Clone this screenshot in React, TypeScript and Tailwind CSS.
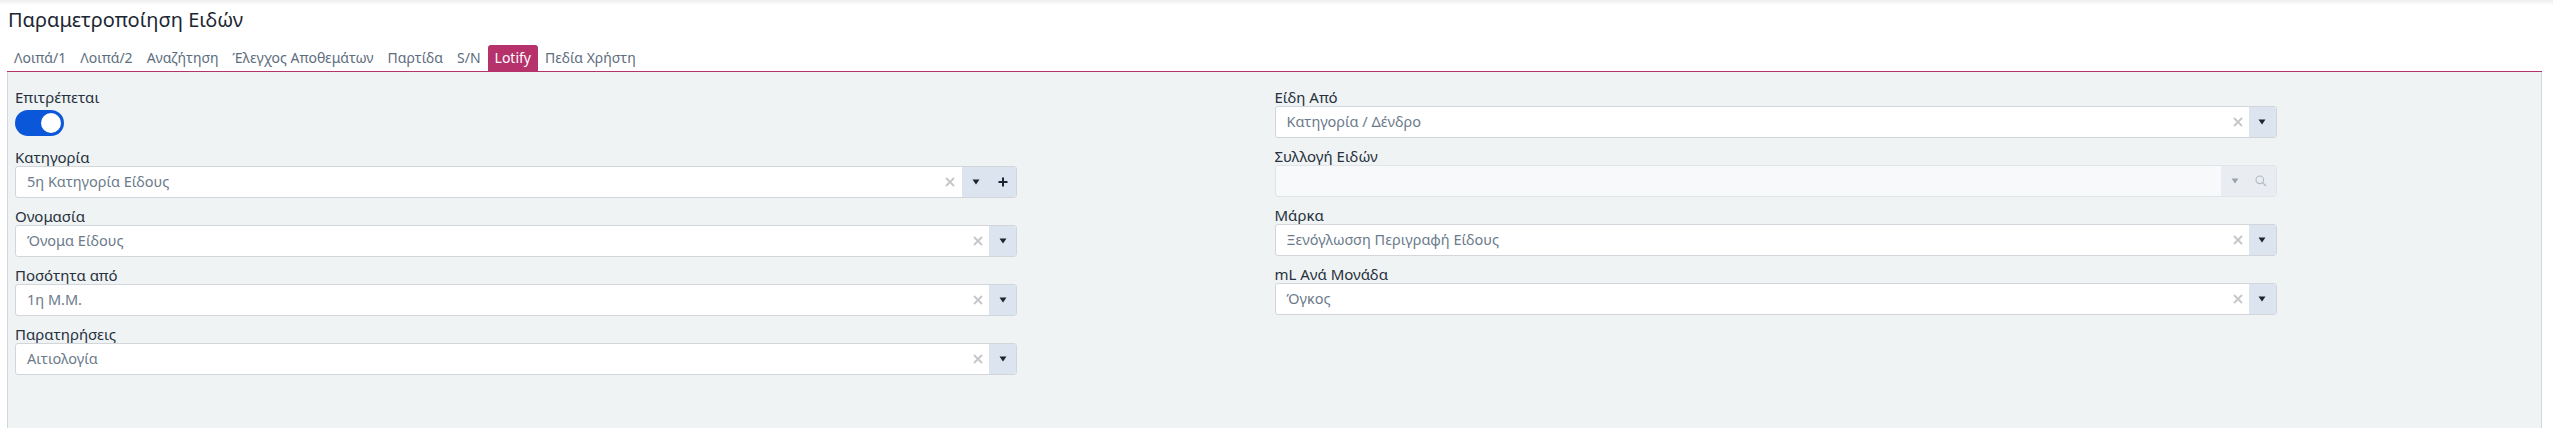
import React from "react";

const tabs = [
	"Λοιπά/1",
	"Λοιπά/2",
	"Αναζήτηση",
	"Έλεγχος Αποθεμάτων",
	"Παρτίδα",
	"S/N",
	"Lotify",
	"Πεδία Χρήστη",
];

const ClearIcon = () => (
	<svg width="10" height="10" viewBox="0 0 10 10" className="shrink-0">
		<path d="M1 1L9 9M9 1L1 9" stroke="#c4c6c8" strokeWidth="1.8" />
	</svg>
);

const Caret = ({ color = "#1b2533" }: { color?: string }) => (
	<svg width="8" height="6" viewBox="0 0 8 6">
		<path d="M0.5 0.5H7.5L4 5.5Z" fill={color} />
	</svg>
);

const Plus = () => (
	<svg width="10" height="10" viewBox="0 0 10 10">
		<path d="M5 0.5V9.5M0.5 5H9.5" stroke="#1b2533" strokeWidth="2" />
	</svg>
);

const Search = () => (
	<svg width="12" height="12" viewBox="0 0 12 12" fill="none">
		<circle cx="4.8" cy="4.8" r="3.8" stroke="#b3b9c0" strokeWidth="1.1" />
		<path d="M7.6 7.6L11 11" stroke="#b3b9c0" strokeWidth="1.3" />
	</svg>
);

type SelectProps = {
	label: string;
	value?: string;
	withAdd?: boolean;
	disabled?: boolean;
};

const SelectField: React.FC<SelectProps> = ({ label, value, withAdd, disabled }) => {
	return (
		<div className="flex flex-col">
			<label className="text-[15px] leading-[18px] text-[#26313d]">{label}</label>
			{disabled ? (
				<div className="flex h-[32px] w-[1002px] overflow-hidden rounded-[3px] border border-[#e1e5e9] bg-[#f7f9fa]">
					<div className="flex-1" />
					<div className="flex w-[55px] items-center justify-around bg-[#e9edf2] pl-[2px]">
						<Caret color="#9aa2ab" />
						<Search />
					</div>
				</div>
			) : (
				<div className="flex h-[32px] w-[1002px] items-center overflow-hidden rounded-[3px] border border-[#d2d6da] bg-white">
					<span className="flex-1 pl-[11px] text-[14.5px] text-[#6c7b8b]">{value}</span>
					<span className={withAdd ? "mr-[7px]" : "mr-[6px]"}>
						<ClearIcon />
					</span>
					<div className="flex h-full items-center bg-[#dbe4ef]">
						<span className="flex w-[27px] justify-center">
							<Caret />
						</span>
						{withAdd && (
							<span className="flex w-[27px] justify-center">
								<Plus />
							</span>
						)}
					</div>
				</div>
			)}
		</div>
	);
};

const App: React.FC = () => {
	return (
		<div className="min-h-screen bg-white font-['Noto_Sans',sans-serif]">
			<div className="h-[5px] bg-linear-to-b from-[#eeeeee] to-white" />
			<h1 className="mb-[11px] px-[8px] pt-[1px] text-[20px] leading-[28px] text-[#1c2733]">
				Παραμετροποίηση Ειδών
			</h1>
			<div className="ml-[7px] mr-[11px]">
				<nav className="flex border-b border-[#b5326b]">
					{tabs.map((t) => (
						<span
							key={t}
							className={
								t === "Lotify"
									? "rounded-t-[3px] bg-[#b5326b] px-[7px] text-[14px] leading-[26px] text-white"
									: "px-[7px] text-[14px] leading-[26px] text-[#5d6d7e]"
							}
						>
							{t}
						</span>
					))}
				</nav>
				<div className="grid min-h-[360px] grid-cols-2 border-x border-[#d3d7db] bg-[#f0f3f4] px-[7px] pt-[16px]">
					<div className="flex flex-col gap-[9px]">
						<div className="mb-[3px] flex flex-col">
							<label className="text-[15px] leading-[18px] text-[#26313d]">Επιτρέπεται</label>
							<div className="mt-[4px] flex h-[26px] w-[49px] items-center justify-end rounded-full bg-[#0b57d9] pr-[3px]">
								<div className="h-[20px] w-[20px] rounded-full bg-white" />
							</div>
						</div>
						<SelectField label="Κατηγορία" value="5η Κατηγορία Είδους" withAdd />
						<SelectField label="Ονομασία" value="Όνομα Είδους" />
						<SelectField label="Ποσότητα από" value="1η Μ.Μ." />
						<SelectField label="Παρατηρήσεις" value="Αιτιολογία" />
					</div>
					<div className="flex flex-col gap-[9px]">
						<SelectField label="Είδη Από" value="Κατηγορία / Δένδρο" />
						<SelectField label="Συλλογή Ειδών" disabled />
						<SelectField label="Μάρκα" value="Ξενόγλωσση Περιγραφή Είδους" />
						<SelectField label="mL Ανά Μονάδα" value="Όγκος" />
					</div>
				</div>
			</div>
		</div>
	);
};

export default App;
